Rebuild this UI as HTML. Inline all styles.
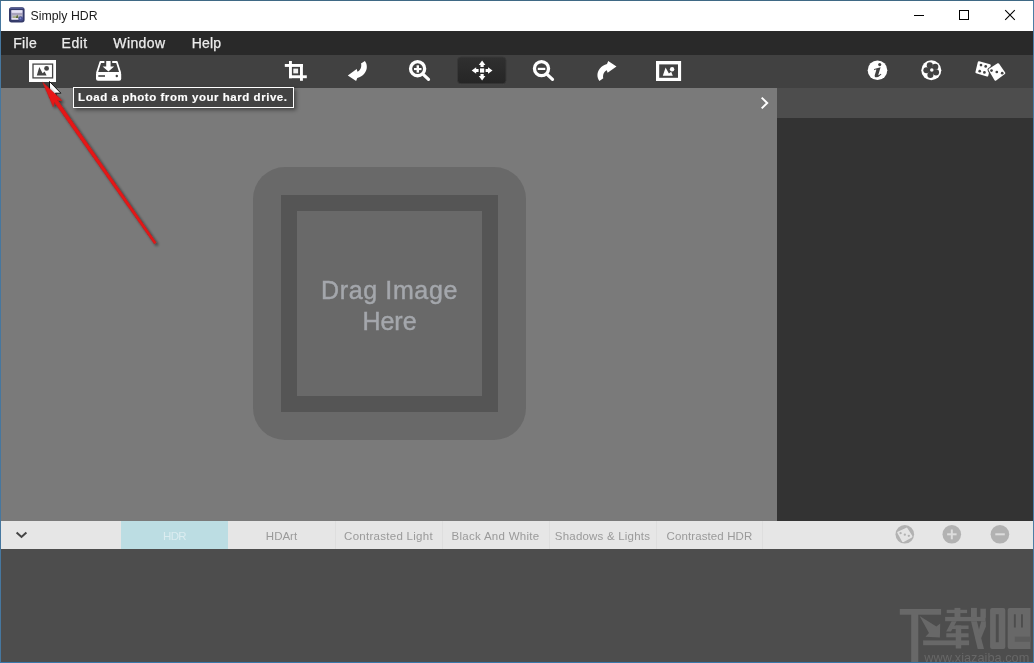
<!DOCTYPE html>
<html>
<head>
<meta charset="utf-8">
<title>Simply HDR</title>
<style>
html,body{margin:0;padding:0;}
body{width:1034px;height:663px;overflow:hidden;background:#3c84bd;font-family:"Liberation Sans",sans-serif;position:relative;}
.abs{position:absolute;}
#win{position:absolute;left:1px;top:1px;width:1032px;height:661px;background:#4d4d4d;overflow:hidden;}
#title .txt,#menu span,#tabs .tab,#drop .t,#tip span{opacity:0.999;}
#title{position:absolute;left:0;top:0;width:1032px;height:30px;background:#fff;}
#title .txt{position:absolute;left:29.6px;top:7px;font-size:12.3px;line-height:16px;color:#1a1a1a;white-space:nowrap;}
#menu{position:absolute;left:0;top:30px;width:1032px;height:24px;background:#292929;}
#menu span{position:absolute;top:3px;font-size:14px;line-height:18px;color:#ececec;white-space:nowrap;-webkit-text-stroke:0.25px #ececec;}
#tool{position:absolute;left:0;top:54px;width:1032px;height:33px;background:#414141;}
#canvas{position:absolute;left:0;top:87px;width:776px;height:433px;background:#7a7a7a;}
#sidehead{position:absolute;left:776px;top:87px;width:256px;height:30px;background:#4d4d4d;}
#side{position:absolute;left:776px;top:117px;width:256px;height:403px;background:#333333;}
#tabs{position:absolute;left:0;top:520px;width:1032px;height:28px;background:#e6e6e6;}
#tabs .tab{position:absolute;top:0;height:28px;overflow:hidden;font-size:11.5px;line-height:30px;color:#9a9a9a;text-align:center;white-space:nowrap;letter-spacing:0.28px;}
#bottom{position:absolute;left:0;top:548px;width:1032px;height:113px;background:#4d4d4d;}
#drop{position:absolute;left:252px;top:79px;width:273px;height:273px;border-radius:32px;background:#696969;}
#drop .frame{position:absolute;left:28px;top:28px;width:185px;height:185px;border:16px solid #555555;background:#696969;}
#drop .t{position:absolute;left:0;width:273px;text-align:center;font-size:25px;line-height:30px;color:#a4a7ac;letter-spacing:0.63px;white-space:nowrap;-webkit-text-stroke:0.45px #a4a7ac;}
#tip{position:absolute;left:72px;top:86px;width:219px;height:19px;border:1px solid #fff;background:#434343;box-shadow:2px 2px 4px rgba(0,0,0,0.45);}
#tip span{position:absolute;left:4.1px;top:2px;font-size:11.5px;line-height:15px;font-weight:bold;color:#fff;white-space:nowrap;letter-spacing:0.54px;-webkit-text-stroke:0.15px #fff;}
svg{position:absolute;overflow:visible;}
</style>
</head>
<body>
<div class="abs" style="left:0;top:0;width:1034px;height:1px;background:#3f6985"></div>
<div class="abs" style="left:0;top:1px;width:1px;height:662px;background:#46779f"></div>
<div class="abs" style="left:1033px;top:1px;width:1px;height:662px;background:#4b7da5"></div>
<div class="abs" style="left:0;top:662px;width:1034px;height:1px;background:#3a78aa"></div>
<div id="win">
  <div id="title">
    <svg id="appicon" style="left:8px;top:6px" width="16" height="16" viewBox="0 0 16 16">
      <rect x="0" y="0.2" width="15.6" height="15.2" rx="2.6" fill="#343a69"/>
      <rect x="0.8" y="0.8" width="14" height="1.2" rx="0.6" fill="#4f578f"/>
      <rect x="2.3" y="3.1" width="11.3" height="9.5" fill="#c9c6e0"/>
      <rect x="2.6" y="3.3" width="10.7" height="2.3" fill="#e4e2f3"/>
      <rect x="3" y="6" width="10" height="2.2" fill="#a9a3bd"/>
      <rect x="3" y="8" width="9.5" height="3" fill="#b9b8c0"/>
      <path d="M6.5 11 L8.3 7.6 L9.6 11 Z" fill="#5f6f3a"/>
      <rect x="4" y="9.2" width="3" height="1.8" fill="#a8ad85"/>
      <rect x="2.6" y="11.3" width="7" height="1.2" fill="#f1f0f8"/>
      <circle cx="11.7" cy="11.7" r="2.4" fill="#474f92"/>
      <circle cx="11.4" cy="11.2" r="1" fill="#7f87c6"/>
    </svg>
    <div class="txt">Simply HDR</div>
    <svg style="left:0;top:0" width="1032" height="30">
      <rect x="913" y="14" width="10" height="1" fill="#000"/>
      <rect x="958.5" y="9.5" width="9" height="9" fill="none" stroke="#000" stroke-width="1"/>
      <path d="M1004.2 9.2 L1013.8 18.8 M1013.8 9.2 L1004.2 18.8" stroke="#000" stroke-width="1.1" fill="none"/>
    </svg>
  </div>
  <div id="menu">
    <span style="left:12.2px;letter-spacing:0.35px">File</span>
    <span style="left:60.6px;letter-spacing:0.5px">Edit</span>
    <span style="left:112.3px;letter-spacing:0.4px">Window</span>
    <span style="left:190.8px;letter-spacing:0.15px">Help</span>
  </div>
  <div id="tool"></div>
  <div id="canvas">
    <div id="drop">
      <div class="frame"></div>
      <div class="t" style="top:108.4px">Drag Image</div>
      <div class="t" style="top:138.6px;letter-spacing:0">Here</div>
    </div>
  </div>
  <div id="sidehead"></div>
  <div id="side"></div>
  <div id="tabs">
    <div class="abs" style="left:334px;top:0;width:1px;height:28px;background:#dedede"></div>
    <div class="abs" style="left:441px;top:0;width:1px;height:28px;background:#dedede"></div>
    <div class="abs" style="left:548px;top:0;width:1px;height:28px;background:#dedede"></div>
    <div class="abs" style="left:655px;top:0;width:1px;height:28px;background:#dedede"></div>
    <div class="abs" style="left:761px;top:0;width:1px;height:28px;background:#dedede"></div>
    <div class="tab" style="left:120px;width:107px;background:#bcdde3;color:#dbecf0;letter-spacing:-0.6px">HDR</div>
    <div class="tab" style="left:227px;width:107px;letter-spacing:0px">HDArt</div>
    <div class="tab" style="left:334px;width:107px">Contrasted Light</div>
    <div class="tab" style="left:441px;width:107px">Black And White</div>
    <div class="tab" style="left:548px;width:107px;letter-spacing:0.2px">Shadows &amp; Lights</div>
    <div class="tab" style="left:655px;width:107px;letter-spacing:0.1px">Contrasted HDR</div>
  </div>
  <div id="bottom"></div>

  <!-- overlay svg in page coordinates -->
  <svg id="ov" style="left:-1px;top:-1px" width="1034" height="663" viewBox="0 0 1034 663">
    <defs>
      <linearGradient id="selg" x1="0" y1="0" x2="0" y2="1"><stop offset="0" stop-color="#303030"/><stop offset="1" stop-color="#252525"/></linearGradient>
      <clipPath id="c1"><circle cx="904.8" cy="534.3" r="8.2"/></clipPath>
      <filter id="sh" x="-20%" y="-20%" width="140%" height="140%"><feGaussianBlur in="SourceAlpha" stdDeviation="1.6"/><feOffset dx="1.5" dy="1.5"/><feComponentTransfer><feFuncA type="linear" slope="0.55"/></feComponentTransfer><feMerge><feMergeNode/><feMergeNode in="SourceGraphic"/></feMerge></filter>
    </defs>
    <!-- ICONS -->
    <g id="icons">
      <!-- 1 load photo -->
      <rect x="29" y="60" width="27" height="22" fill="#fff"/>
      <rect x="33" y="64.1" width="19.6" height="13.8" fill="none" stroke="#454545" stroke-width="1.3"/>
      <path d="M36.8 75.6 L39.3 67 L42.6 73.2 L44.6 71.6 L46.6 75.6 Z" fill="#454545"/>
      <circle cx="46.6" cy="68.4" r="2.4" fill="#454545"/>
      <!-- 2 drive -->
      <rect x="96" y="72" width="25.2" height="8.8" rx="2" fill="#fff"/>
      <path d="M96.9 73 L100.4 62 L104.4 62 M112.2 62 L116.8 62 L120.3 73" fill="none" stroke="#fff" stroke-width="1.8" stroke-linejoin="round"/>
      <path d="M106.2 61 H110.6 V66.4 H114.2 L108.4 71.6 L102.6 66.4 H106.2 Z" fill="#fff"/>
      <rect x="98.3" y="75.2" width="6.7" height="1.6" fill="#424242"/>
      <circle cx="116.8" cy="76" r="1.2" fill="#424242"/>
      <!-- 3 crop -->
      <rect x="289" y="61" width="2.9" height="17.2" fill="#fff"/>
      <rect x="284.8" y="64" width="18.1" height="2.9" fill="#fff"/>
      <rect x="300" y="64" width="2.9" height="16.8" fill="#fff"/>
      <rect x="289" y="75.3" width="17.8" height="2.9" fill="#fff"/>
      <rect x="293.3" y="68.6" width="4.8" height="4.8" fill="#f2f2f2"/>
      <!-- 4 rotate left -->
      <path d="M364.9 61 C367.6 64.5 367.5 69.5 364.6 73.2 C362.7 75.7 360.1 77.3 357.3 77.9 L356.1 80.9 L347.8 75.4 L356.7 69.1 L357.5 71.7 C359.3 70.8 360.5 69.3 361 67.5 C361.4 65.9 361.3 64.6 361 63.6 Z" fill="#fff"/>
      <!-- 5 zoom in -->
      <circle cx="417.6" cy="68.7" r="7.05" fill="none" stroke="#fff" stroke-width="3.3"/>
      <path d="M423.2 74.4 L428.5 79.4" stroke="#fff" stroke-width="3.2" stroke-linecap="round"/>
      <rect x="414" y="68" width="7.5" height="2.1" fill="#fff"/>
      <rect x="416.6" y="65.3" width="2.4" height="7.3" fill="#fff"/>
      <!-- 6 move (selected) -->
      <rect x="458.5" y="58" width="46.5" height="26.9" rx="3.5" fill="#484848"/>
      <rect x="457.5" y="57" width="48.5" height="26.8" rx="3.5" fill="url(#selg)" stroke="#383838" stroke-width="1"/>
      <g fill="#fff">
        <rect x="480" y="68.4" width="4.2" height="4.2"/>
        <path d="M482.1 60.4 L485.4 64.9 H483.7 V67.1 H480.5 V64.9 H478.8 Z"/>
        <path d="M482.1 80.6 L485.4 76.1 H483.7 V73.9 H480.5 V76.1 H478.8 Z"/>
        <path d="M471.7 70.5 L476.2 67.2 V68.9 H478.6 V72.1 H476.2 V73.8 Z"/>
        <path d="M492.5 70.5 L488 67.2 V68.9 H485.6 V72.1 H488 V73.8 Z"/>
      </g>
      <!-- 7 zoom out -->
      <circle cx="541.5" cy="68.6" r="7.05" fill="none" stroke="#fff" stroke-width="3.3"/>
      <path d="M547.1 74.3 L552.5 79.4" stroke="#fff" stroke-width="3.2" stroke-linecap="round"/>
      <rect x="537.8" y="67.8" width="7.5" height="2.2" fill="#fff"/>
      <!-- 8 rotate right -->
      <path d="M364.9 61 C367.6 64.5 367.5 69.5 364.6 73.2 C362.7 75.7 360.1 77.3 357.3 77.9 L356.1 80.9 L347.8 75.4 L356.7 69.1 L357.5 71.7 C359.3 70.8 360.5 69.3 361 67.5 C361.4 65.9 361.3 64.6 361 63.6 Z" fill="#fff" transform="translate(249.7 0.1) rotate(180 357.3 70.9)"/>
      <!-- 9 picture -->
      <rect x="656" y="61" width="25.1" height="20" fill="#fff"/>
      <rect x="659.2" y="64.4" width="18.8" height="13.4" fill="#424242"/>
      <path d="M662.8 75.7 L665.6 67.5 L668.9 73.4 L671.2 71.7 L672.8 75.7 Z" fill="#fff"/>
      <circle cx="672.1" cy="69.2" r="2.2" fill="#fff"/>
      <!-- 10 info -->
      <circle cx="877.5" cy="70.3" r="9.8" fill="#fff"/>
      <circle cx="879.7" cy="64.6" r="1.55" fill="#424242"/>
      <path d="M873.9 70.3 L874.2 69.1 L880.6 67.3 L878.4 74.5 Q878.2 75.4 879 75.1 L880.8 73.8 L881.4 74.6 Q878.7 77.3 876.3 77.3 Q874.2 77.3 874.8 75 L876.3 70.1 Q876.5 69.4 875.8 69.6 Z" fill="#424242"/>
      <!-- 11 flower -->
      <circle cx="931.3" cy="70.2" r="10" fill="#fff"/>
      <g fill="#424242">
        <circle cx="929.8" cy="65.4" r="3.05"/>
        <circle cx="935.3" cy="66.7" r="3.05"/>
        <circle cx="936" cy="72.4" r="3.05"/>
        <circle cx="930.4" cy="74.9" r="3.05"/>
        <circle cx="926.4" cy="70.2" r="3.05"/>
        <circle cx="931.5" cy="70.1" r="3.4"/>
      </g>
      <circle cx="931.8" cy="70.1" r="1.75" fill="#fff"/>
      <!-- 12 dice -->
      <path d="M978.9 62.3 L989.7 65.2 L987.2 75.5 L976.5 72.3 Z" fill="#fff" stroke="#fff" stroke-width="2.2" stroke-linejoin="round"/>
      <g fill="#424242">
        <circle cx="981" cy="65.1" r="1.35"/><circle cx="985.7" cy="66.4" r="1.35"/>
        <circle cx="979.7" cy="71.2" r="1.35"/><circle cx="984.4" cy="72.4" r="1.35"/>
      </g>
      <path d="M998.2 64.3 L1004.2 73.1 L995.5 79.6 L989.6 69.8 Z" fill="#424242" stroke="#424242" stroke-width="4.2" stroke-linejoin="round"/>
      <path d="M998.2 64.3 L1004.2 73.1 L995.5 79.6 L989.6 69.8 Z" fill="#fff" stroke="#fff" stroke-width="2.2" stroke-linejoin="round"/>
      <g fill="#424242">
        <circle cx="991.5" cy="70.6" r="1.35"/><circle cx="996.8" cy="72" r="1.35"/><circle cx="1002.2" cy="73.2" r="1.35"/>
      </g>
    </g>
    <!-- CHEVRONS -->
    <path d="M761.7 97.6 L767.2 103 L761.7 108.4" stroke="#fff" stroke-width="2" fill="none"/>
    <path d="M16.6 532.4 L21.5 537 L26.4 532.4" stroke="#444" stroke-width="2" fill="none"/>
    <!-- TABICONS -->
    <g id="tabicons">
      <circle cx="904.8" cy="534.3" r="9.3" fill="#b2b2b2"/>
      <g clip-path="url(#c1)">
        <path d="M906.7 528.3 L912 536.6 L902.9 541.6 L897.9 532.4 Z" fill="#e4e4e4" stroke="#e4e4e4" stroke-width="1.4" stroke-linejoin="round"/>
        <circle cx="900.6" cy="533.2" r="1.15" fill="#b2b2b2"/><circle cx="904.8" cy="534.7" r="1.15" fill="#b2b2b2"/><circle cx="908.8" cy="535.8" r="1.15" fill="#b2b2b2"/>
      </g>
      <circle cx="951.8" cy="534.3" r="9.3" fill="#b2b2b2"/>
      <rect x="947.1" y="533.3" width="9.5" height="2" fill="#dddddd"/>
      <rect x="950.8" y="529.5" width="2" height="9.8" fill="#dddddd"/>
      <circle cx="999.9" cy="534.3" r="9.3" fill="#b2b2b2"/>
      <rect x="995.3" y="533.3" width="9.5" height="2" fill="#dddddd"/>
    </g>
    <!-- WATERMARK -->
    <g id="wm" fill="#686868">
      <rect x="899.8" y="609" width="41.3" height="5.7"/>
      <rect x="911.2" y="614" width="7.1" height="48"/>
      <path d="M919.6 616 L936.4 626.6 L940.2 623.6 L939.9 637.6 L925.4 636.8 L929 633 Z"/>
      <rect x="923.1" y="640.4" width="46" height="4.8"/>
      <!-- zai left -->
      <rect x="946.7" y="609.8" width="20.4" height="3.3"/>
      <rect x="954.5" y="607.9" width="5.9" height="10"/>
      <rect x="945.1" y="616.9" width="40.4" height="4.3"/>
      <path d="M951.6 621.2 L956.6 621.2 L951 631.5 L946.2 631.5 Z"/>
      <rect x="950.2" y="625.5" width="18.4" height="3.5"/>
      <rect x="946.3" y="633.3" width="22.3" height="4"/>
      <rect x="955.7" y="625.5" width="5.5" height="23"/>
      <!-- zai right -->
      <rect x="971" y="607.9" width="5.9" height="10"/>
      <path d="M971 621.2 L976.9 621.2 L984 649 L977.7 649 Z"/>
      <rect x="980.4" y="608.7" width="5.5" height="9"/>
      <path d="M981.2 621.2 L985.9 621.2 L985.9 626.5 L980.6 639.5 L978.4 631.5 Z"/>
      <!-- ba -->
      <path fill-rule="evenodd" d="M992.1 608.1 H1003.3 Q1005.3 608.1 1005.3 610.1 V646.9 Q1005.3 648.9 1003.3 648.9 H992.1 Q990.1 648.9 990.1 646.9 V610.1 Q990.1 608.1 992.1 608.1 Z M995.8 614.3 V642.3 H998.7 V614.3 Z"/>
      <path fill-rule="evenodd" d="M1009.7 608.1 H1030.5 V648.9 H1009.7 Q1007.7 648.9 1007.7 646.9 V610.1 Q1007.7 608.1 1009.7 608.1 Z M1013.9 614.3 V627.6 H1015.8 V614.3 Z M1021 614.3 V627.6 H1022.9 V614.3 Z"/>
      <rect x="1014.8" y="636.6" width="15.7" height="5.2" fill="#5c5c5c"/>
      <text x="924.3" y="661.5" font-family="Liberation Sans" font-size="12.6" fill="#676767" textLength="105" lengthAdjust="spacingAndGlyphs" style="opacity:0.999">www.xiazaiba.com</text>
    </g>
    <!-- ARROW -->
    <g id="arrow">
      <path d="M49.5 81.5 V97.6 L53.2 94.1 L55.9 100.4 L58.2 99.4 L55.5 93.2 H60.9 Z" fill="#fff" stroke="#111" stroke-width="1" stroke-linejoin="miter"/>
      <path d="M42.8 82.4 L53.2 106.6 L54.5 102.3 L154.3 243.8 L156.1 242.6 L57.5 100.2 L61.9 100.5 Z" fill="#e81515" stroke="#c61a1a" stroke-width="0.7" filter="url(#sh)"/>
    </g>
  </svg>
  <div id="tip"><span>Load a photo from your hard drive.</span></div>
</div>
</body>
</html>
